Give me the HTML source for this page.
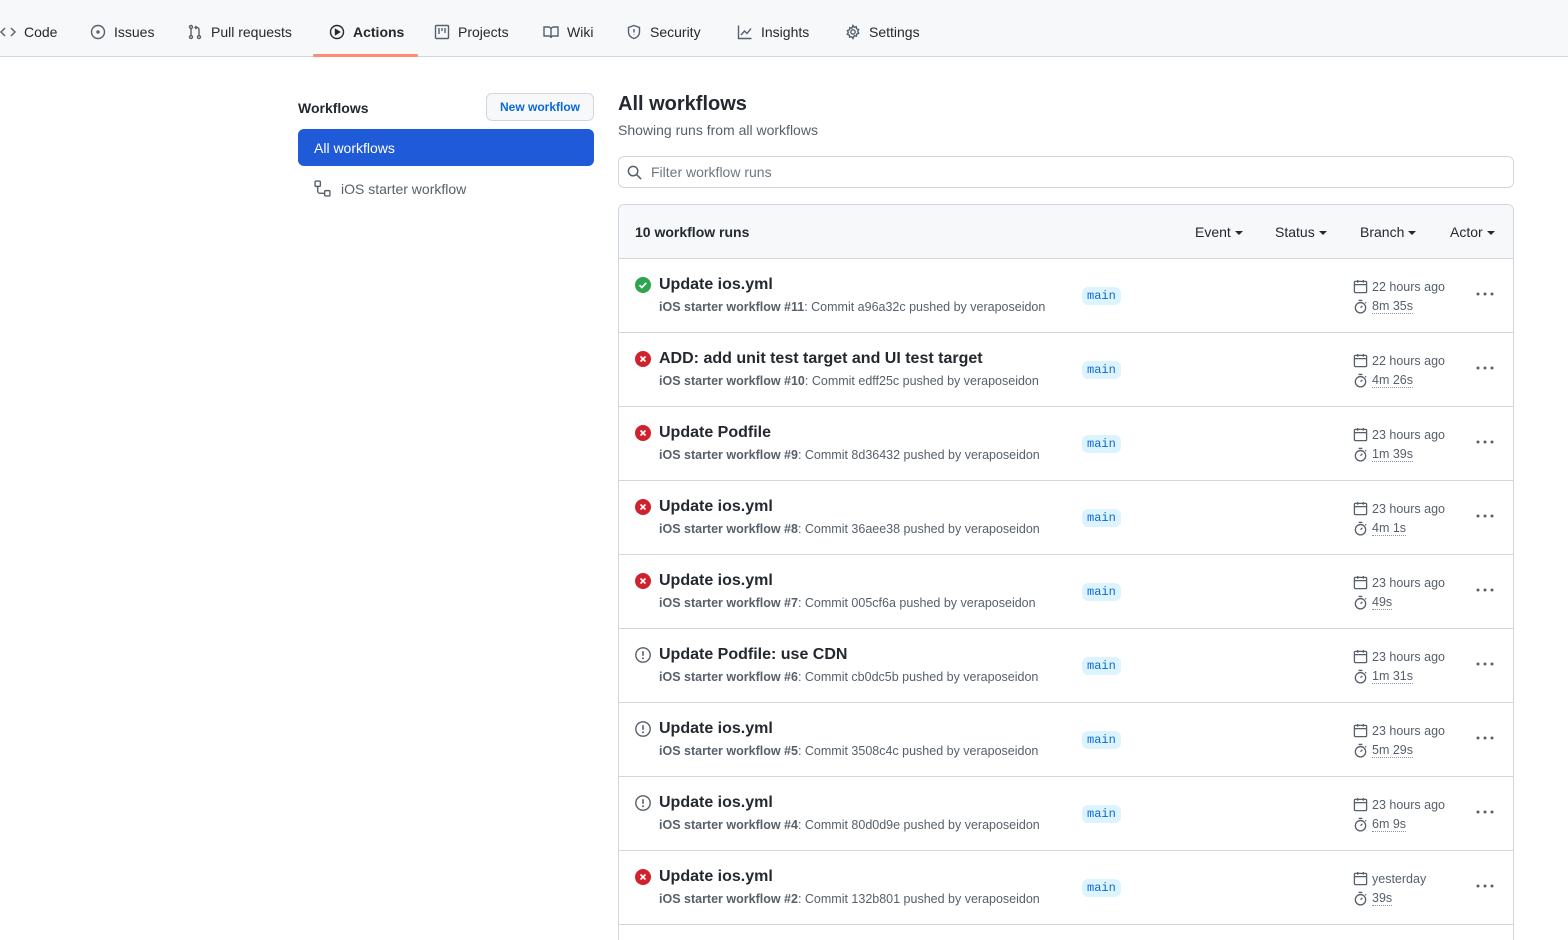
<!DOCTYPE html>
<html><head><meta charset="utf-8">
<style>
*{box-sizing:border-box;margin:0;padding:0}
html,body{width:1568px;height:940px;overflow:hidden}
body{background:#fff;font-family:"Liberation Sans",sans-serif;color:#24292f;font-size:14px;position:relative}
.nav{position:absolute;left:0;top:0;width:1568px;height:57px;background:#f6f8fa;border-bottom:1px solid #d0d7de}
.ni{position:absolute;top:22px;height:20px;display:flex;align-items:center;gap:8px;font-size:14px;color:#24292f}
.ni svg{width:16px;height:16px;fill:none;stroke:#57606a;stroke-width:1.4}
.uline{position:absolute;left:313px;top:54px;width:105px;height:3px;background:#fd8c73;border-radius:2px}
.abs{position:absolute}
.btn{position:absolute;left:486px;top:93px;width:108px;height:28px;border:1px solid #d0d7de;border-radius:6px;background:#f6f8fa;color:#0969da;font-size:12px;font-weight:bold;display:flex;align-items:center;justify-content:center}
.sel{position:absolute;left:298px;top:129px;width:296px;height:37px;background:#1f5bd8;border-radius:6px;color:#fff;font-size:14px;padding-left:16px;display:flex;align-items:center}
.filter{position:absolute;left:618px;top:156px;width:896px;height:32px;border:1px solid #d0d7de;border-radius:6px;color:#6e7781;font-size:14px;padding-left:32px;display:flex;align-items:center}
.box{position:absolute;left:618px;top:204px;width:896px;height:760px;border:1px solid #d0d7de;border-radius:6px 6px 0 0;overflow:hidden}
.hdr{height:54px;background:#f6f8fa;border-bottom:1px solid #d0d7de;position:relative}
.row{height:74px;border-bottom:1px solid #d0d7de;position:relative}
.t{position:absolute;left:40px;top:17px;font-size:16px;font-weight:bold;color:#24292f}
.s{position:absolute;left:40px;top:41px;font-size:12.5px;color:#57606a}
.s b{font-weight:bold}
.ic{position:absolute;left:16px;top:18px;width:16px;height:16px}
.br{position:absolute;left:463px;top:28px;height:18px;padding:0 5px;background:#ddf4ff;color:#0969da;border-radius:6px;font-family:"Liberation Mono",monospace;font-size:12px;line-height:18px}
.d1{position:absolute;left:734px;top:20px;font-size:12.5px;color:#57606a;display:flex;align-items:center;gap:4px}
.d2{position:absolute;left:734px;top:40px;font-size:12.5px;color:#57606a;display:flex;align-items:center;gap:4px}
.d2 span{border-bottom:1px dotted #8c959f;line-height:14px}
.d1 svg,.d2 svg{width:15px;height:15px;fill:none;stroke:#57606a;stroke-width:1.4}
.dots{position:absolute;left:857px;top:33px}
.f{position:absolute;top:19px;font-size:14px;color:#24292f}
.f:after{content:"";display:inline-block;margin-left:4px;border-left:4px solid transparent;border-right:4px solid transparent;border-top:4px solid #24292f;vertical-align:middle}
</style></head><body>
<div class="nav">
 <div class="ni" style="left:0"><svg viewBox="0 0 16 16"><path d="M5 4L1 8l4 4M11 4l4 4-4 4"/></svg>Code</div>
 <div class="ni" style="left:90px"><svg viewBox="0 0 16 16"><circle cx="8" cy="8" r="6.5"/><circle cx="8" cy="8" r="1" fill="#57606a"/></svg>Issues</div>
 <div class="ni" style="left:187px"><svg viewBox="0 0 16 16"><circle cx="4" cy="3" r="1.5"/><circle cx="4" cy="13" r="1.5"/><circle cx="12" cy="13" r="1.5"/><path d="M4 4.5v7M12 11.5V5.5a2 2 0 0 0-2-2H8M9.5 2L8 3.5 9.5 5"/></svg>Pull requests</div>
 <div class="ni" style="left:329px;font-weight:bold"><svg viewBox="0 0 16 16" style="stroke:#24292f"><circle cx="8" cy="8" r="6.5"/><path d="M6.5 5.5v5l4-2.5z" fill="#24292f"/></svg>Actions</div>
 <div class="ni" style="left:434px"><svg viewBox="0 0 16 16"><rect x="1.5" y="1.5" width="13" height="13" rx="1"/><path d="M5 4v6M8 4v3M11 4v5"/></svg>Projects</div>
 <div class="ni" style="left:543px"><svg viewBox="0 0 16 16"><path d="M1 3h4.5a2.5 2.5 0 0 1 2.5 2.5V14a2 2 0 0 0-2-2H1zM15 3h-4.5A2.5 2.5 0 0 0 8 5.5V14a2 2 0 0 1 2-2h5z"/></svg>Wiki</div>
 <div class="ni" style="left:626px"><svg viewBox="0 0 16 16"><path d="M8 1.5l5.5 2v4.5c0 3.5-2.5 5.5-5.5 6.5C5 13.5 2.5 11.5 2.5 8V3.5z"/><path d="M8 5v3.5M8 10.5v.5"/></svg>Security</div>
 <div class="ni" style="left:737px"><svg viewBox="0 0 16 16"><path d="M1.5 1.5v13h13M4 11l3.5-4 2.5 2.5 4-5"/></svg>Insights</div>
 <div class="ni" style="left:845px"><svg viewBox="0 0 16 16"><circle cx="8" cy="8" r="2.2"/><path d="M8 1.5l1.2 1.8 2-.6.4 2.1 2 .8-.9 1.9 1 1.8-2 .8-.3 2.1-2.1-.5L8 14.5l-1.300-1.8-2.1.5-.3-2.1-2-.8 1-1.8-.9-1.9 2-.8.4-2.1 2 .6z"/></svg>Settings</div>
 <div class="uline"></div>
</div>

<div class="abs" style="left:298px;top:100px;font-size:14px;font-weight:bold">Workflows</div>
<div class="btn">New workflow</div>
<div class="sel">All workflows</div>
<div class="abs" style="left:314px;top:180px;display:flex;align-items:center;gap:10px;color:#57606a"><svg width="17" height="17" viewBox="0 0 16 16" fill="none" stroke="#57606a" stroke-width="1.3"><rect x="1" y="1" width="5" height="5" rx="1"/><rect x="10" y="10" width="5" height="5" rx="1"/><path d="M3.5 6v4.5a2 2 0 0 0 2 2H10"/></svg><span style="font-size:14px">iOS starter workflow</span></div>

<div class="abs" style="left:618px;top:93px;font-size:20px;font-weight:bold">All workflows</div>
<div class="abs" style="left:618px;top:122px;font-size:14px;color:#57606a">Showing runs from all workflows</div>
<div class="filter">Filter workflow runs</div>
<svg class="abs" style="left:627px;top:165px" width="15" height="15" viewBox="0 0 16 16" fill="none" stroke="#57606a" stroke-width="1.6"><circle cx="6.5" cy="6.5" r="5"/><path d="M10.2 10.2L15 15"/></svg>

<div class="box">
 <div class="hdr">
  <div class="abs" style="left:16px;top:19px;font-size:14px;font-weight:bold">10 workflow runs</div>
  <div class="f" style="left:576px">Event</div>
  <div class="f" style="left:656px">Status</div>
  <div class="f" style="left:741px">Branch</div>
  <div class="f" style="left:831px">Actor</div>
 </div>
 ROWS
</div>
<script>
var ok='<svg class="ic" viewBox="0 0 16 16"><circle cx="8" cy="8" r="8" fill="#2da44e"/><path d="M4.5 8.2l2.3 2.3 4.5-4.6" stroke="#fff" stroke-width="1.7" fill="none"/></svg>';
var no='<svg class="ic" viewBox="0 0 16 16"><circle cx="8" cy="8" r="8" fill="#cf222e"/><path d="M5.5 5.5l5 5M10.5 5.5l-5 5" stroke="#fff" stroke-width="1.7"/></svg>';
var wa='<svg class="ic" viewBox="0 0 16 16"><circle cx="8" cy="8" r="7.2" fill="none" stroke="#57606a" stroke-width="1.4"/><path d="M8 4.2v4.6" stroke="#57606a" stroke-width="1.6"/><circle cx="8" cy="11.3" r="1" fill="#57606a"/></svg>';
var cal='<svg viewBox="0 0 16 16"><rect x="1.5" y="2.5" width="13" height="12" rx="1"/><path d="M1.5 6h13M5 1v3M11 1v3"/></svg>';
var sw='<svg viewBox="0 0 16 16"><circle cx="8" cy="9.3" r="5.5"/><path d="M6 1.5h4M8 9.3l2-2M13 3.5l1 1"/></svg>';
var dots='<svg class="dots" width="18" height="4" viewBox="0 0 18 4"><circle cx="2" cy="2" r="1.5" fill="#57606a"/><circle cx="9" cy="2" r="1.5" fill="#57606a"/><circle cx="16" cy="2" r="1.5" fill="#57606a"/></svg>';
var R=[[ok,'Update ios.yml','11','a96a32c','22 hours ago','8m 35s'],
[no,'ADD: add unit test target and UI test target','10','edff25c','22 hours ago','4m 26s'],
[no,'Update Podfile','9','8d36432','23 hours ago','1m 39s'],
[no,'Update ios.yml','8','36aee38','23 hours ago','4m 1s'],
[no,'Update ios.yml','7','005cf6a','23 hours ago','49s'],
[wa,'Update Podfile: use CDN','6','cb0dc5b','23 hours ago','1m 31s'],
[wa,'Update ios.yml','5','3508c4c','23 hours ago','5m 29s'],
[wa,'Update ios.yml','4','80d0d9e','23 hours ago','6m 9s'],
[no,'Update ios.yml','2','132b801','yesterday','39s']];
var h='';R.forEach(function(r){h+='<div class="row">'+r[0]+'<div class="t">'+r[1]+'</div><div class="s"><b>iOS starter workflow #'+r[2]+'</b>: Commit '+r[3]+' pushed by veraposeidon</div><div class="br">main</div><div class="d1">'+cal+r[4]+'</div><div class="d2">'+sw+'<span>'+r[5]+'</span></div>'+dots+'</div>';});
var b=document.querySelector('.box');b.innerHTML=b.innerHTML.replace('ROWS',h);
</script>
</body></html>
